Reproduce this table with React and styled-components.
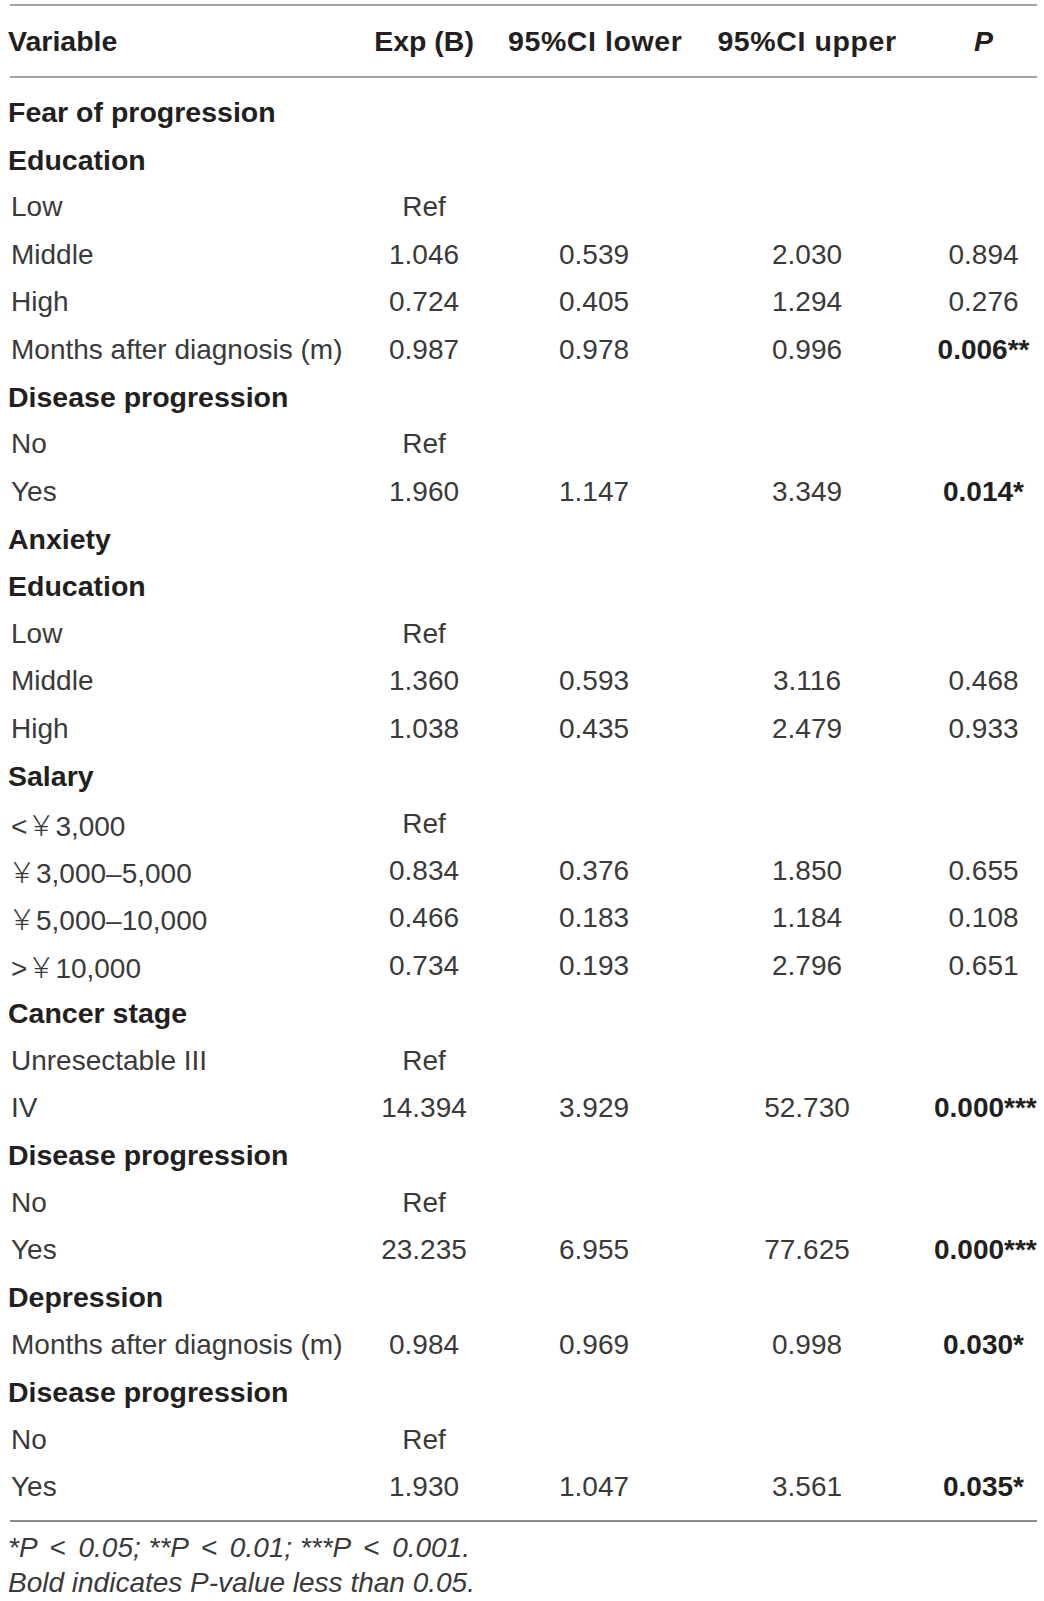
import React from "react";
import styled, { createGlobalStyle, css } from "styled-components";

const GlobalStyle = createGlobalStyle`
  html, body {
    margin: 0;
    padding: 0;
    background: #ffffff;
  }
  body {
    font-family: "Liberation Sans", Arial, "Noto Sans CJK SC", sans-serif;
    color: #2a2a2a;
  }
`;

const columns = "330px 168px 172px 254px 99px";

const Wrapper = styled.div`
  width: 1027px;
  padding: 4px 0 0 10px;
`;

const Table = styled.div`
  display: flex;
  flex-direction: column;
`;

const HeadRow = styled.div`
  display: grid;
  grid-template-columns: ${columns};
  align-items: center;
  height: 70px;
  border-top: 2px solid #a3a3a3;
  border-bottom: 2px solid #a3a3a3;
`;

const HeadCell = styled.div`
  font-weight: 700;
  font-size: 28.5px;
  color: #231f20;
  white-space: nowrap;
  text-align: ${p => (p.$left ? "left" : "center")};
  margin-left: ${p => (p.$left ? "-2px" : "0")};
  letter-spacing: ${p => (p.$wide ? "0.6px" : "0")};
  font-style: ${p => (p.$italic ? "italic" : "normal")};
`;

const Body = styled.div`
  display: flex;
  flex-direction: column;
  padding: 11px 0 9px;
  border-bottom: 2px solid #8a8a8a;
`;

const Row = styled.div`
  display: grid;
  grid-template-columns: ${columns};
  height: 47.4px;
  align-items: center;
`;

const Label = styled.div`
  font-size: 28px;
  white-space: nowrap;
  ${p =>
    p.$section
      ? css`
          font-weight: 700;
          color: #231f20;
          font-size: 28.5px;
          margin-left: -2px;
        `
      : css`
          font-weight: 400;
          color: #3a3a3a;
          margin-left: 1px;
        `}
`;

const Value = styled.div`
  font-size: 28px;
  text-align: center;
  color: #3a3a3a;
  white-space: nowrap;
  ${p =>
    p.$bold &&
    css`
      font-weight: 700;
      color: #231f20;
    `}
`;

const Yen = styled.span`
  font-family: "Noto Sans CJK SC", sans-serif;
  font-weight: 300;
  margin-left: ${p => (p.$lead ? "-3px" : "0")};
`;

const Notes = styled.div`
  padding: 8px 0 0 0;
  margin-left: -2px;
  font-style: italic;
  font-size: 28px;
  line-height: 35.5px;
  color: #3a3a3a;
  white-space: nowrap;
`;

const Lt = styled.span`
  margin: 0 5px;
`;

const rows = [
  { label: "Fear of progression", section: true },
  { label: "Education", section: true },
  { label: "Low", vals: ["Ref"] },
  { label: "Middle", vals: ["1.046", "0.539", "2.030", "0.894"] },
  { label: "High", vals: ["0.724", "0.405", "1.294", "0.276"] },
  { label: "Months after diagnosis (m)", vals: ["0.987", "0.978", "0.996", "0.006**"], bold: true },
  { label: "Disease progression", section: true },
  { label: "No", vals: ["Ref"] },
  { label: "Yes", vals: ["1.960", "1.147", "3.349", "0.014*"], bold: true },
  { label: "Anxiety", section: true },
  { label: "Education", section: true },
  { label: "Low", vals: ["Ref"] },
  { label: "Middle", vals: ["1.360", "0.593", "3.116", "0.468"] },
  { label: "High", vals: ["1.038", "0.435", "2.479", "0.933"] },
  { label: "Salary", section: true },
  { label: <>&lt;<Yen>￥</Yen>3,000</>, vals: ["Ref"] },
  { label: <><Yen $lead>￥</Yen>3,000–5,000</>, vals: ["0.834", "0.376", "1.850", "0.655"] },
  { label: <><Yen $lead>￥</Yen>5,000–10,000</>, vals: ["0.466", "0.183", "1.184", "0.108"] },
  { label: <>&gt;<Yen>￥</Yen>10,000</>, vals: ["0.734", "0.193", "2.796", "0.651"] },
  { label: "Cancer stage", section: true },
  { label: "Unresectable III", vals: ["Ref"] },
  { label: "IV", vals: ["14.394", "3.929", "52.730", "0.000***"], bold: true },
  { label: "Disease progression", section: true },
  { label: "No", vals: ["Ref"] },
  { label: "Yes", vals: ["23.235", "6.955", "77.625", "0.000***"], bold: true },
  { label: "Depression", section: true },
  { label: "Months after diagnosis (m)", vals: ["0.984", "0.969", "0.998", "0.030*"], bold: true },
  { label: "Disease progression", section: true },
  { label: "No", vals: ["Ref"] },
  { label: "Yes", vals: ["1.930", "1.047", "3.561", "0.035*"], bold: true },
];

export default function App() {
  return (
    <Wrapper>
      <GlobalStyle />
      <Table>
        <HeadRow>
          <HeadCell $left>Variable</HeadCell>
          <HeadCell>Exp (B)</HeadCell>
          <HeadCell $wide>95%CI lower</HeadCell>
          <HeadCell $wide>95%CI upper</HeadCell>
          <HeadCell $italic>P</HeadCell>
        </HeadRow>
        <Body>
          {rows.map((r, i) => (
            <Row key={i}>
              <Label $section={r.section}>{r.label}</Label>
              {[0, 1, 2, 3].map(j => (
                <Value key={j} $bold={r.bold && j === 3}>
                  {r.vals ? r.vals[j] : ""}
                </Value>
              ))}
            </Row>
          ))}
        </Body>
      </Table>
      <Notes>
        <div>
          *P <Lt>&lt;</Lt> 0.05; **P <Lt>&lt;</Lt> 0.01; ***P <Lt>&lt;</Lt> 0.001.
        </div>
        <div>Bold indicates P-value less than 0.05.</div>
      </Notes>
    </Wrapper>
  );
}
